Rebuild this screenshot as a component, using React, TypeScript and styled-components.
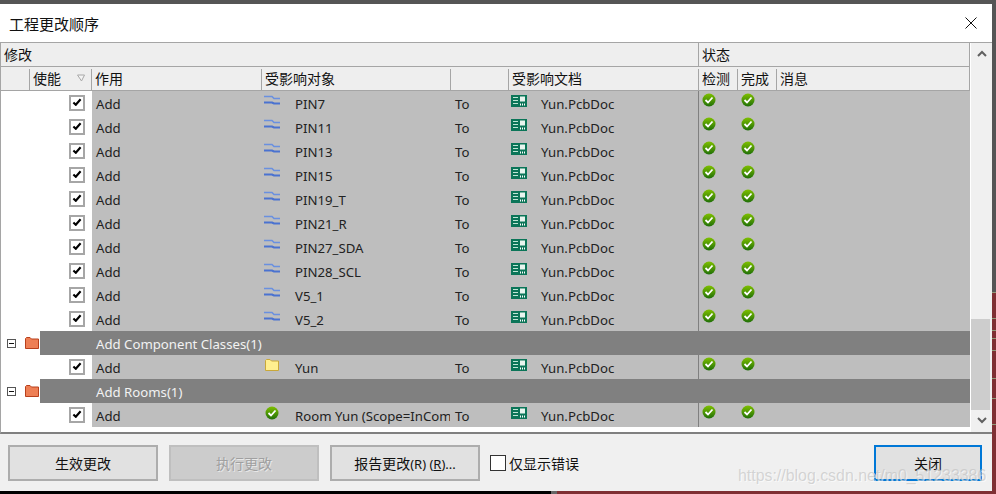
import styled, { createGlobalStyle } from 'styled-components'

const GlobalStyle = createGlobalStyle`
	html, body {
		margin: 0;
		padding: 0;
		background: #000;
	}
	body {
		font-family: "Noto Sans", "Noto Sans CJK SC", sans-serif;
	}
`

const Page = styled.div`
	position: relative;
	width: 996px;
	height: 494px;
	overflow: hidden;
	padding-top: 4px;
	box-sizing: border-box;
	background: linear-gradient(to right, #000 0 551px, #666 551px 557px, #7f2f33 557px);
`

const TopStrip = styled.div`
	position: absolute;
	top: 0;
	left: 0;
	width: 100%;
	height: 4px;
	background: #555;
`

const SideStrip = styled.div`
	position: absolute;
	top: 0;
	right: 0;
	width: 4px;
	height: 292px;
	background: #555;
`

const Traces = styled.svg`
	position: absolute;
	top: 292px;
	right: 0;
	width: 4px;
	height: 140px;
`

const Dialog = styled.div`
	position: relative;
	width: 992px;
	height: 487px;
	background: #f0f0f0;
	display: flex;
	flex-direction: column;
`

const TitleBar = styled.div`
	height: 38px;
	flex: none;
	background: #fff;
	display: flex;
	align-items: center;
	justify-content: space-between;
	padding: 0 15px 0 9px;
	font-size: 15px;
	color: #111;
`

const CloseIcon = styled.svg`
	width: 12px;
	height: 12px;
	display: block;
`

const Content = styled.div`
	height: 392px;
	flex: none;
	display: flex;
	background: #fff;
	border-top: 1px solid #a5a5a5;
	border-left: 1px solid #a5a5a5;
	border-bottom: 2px solid #808080;
	box-sizing: border-box;
`

const Table = styled.div`
	width: 969px;
	flex: none;
	display: flex;
	flex-direction: column;
`

const ScrollBar = styled.div`
	width: 21px;
	margin-left: 1px;
	background: #f0f0f0;
	display: flex;
	flex-direction: column;
	align-items: center;
`

const UpArrow = styled.svg`
	width: 10px;
	height: 7px;
	flex: none;
	margin: 7px 0 3px;
`

const DownArrow = styled.svg`
	width: 10px;
	height: 7px;
	flex: none;
	margin: 4px 0 8px;
`

const ScrollTrack = styled.div`
	flex: 1;
	width: 100%;
	display: flex;
	flex-direction: column;
	justify-content: flex-end;
`

const ScrollThumb = styled.div`
	height: 91px;
	width: 19px;
	margin-bottom: 3px;
	background: #cdcdcd;
`

const HeaderBand = styled.div`
	height: 23px;
	flex: none;
	display: grid;
	grid-template-columns: 697px 1fr;
	background: #eee;
	border-bottom: 1px solid #a5a5a5;
	border-right: 1px solid #a5a5a5;
	font-size: 14px;
	color: #111;
`

const BandCell = styled.div`
	display: flex;
	align-items: center;
	padding: 0 0 2px 3px;
	& + & {
		border-left: 1px solid #a5a5a5;
	}
`

const ColumnHeader = styled.div`
	height: 23px;
	flex: none;
	display: grid;
	grid-template-columns: 28px 62px 170px 189px 58px 190px 39px 39px 1fr;
	background: #eee;
	border-bottom: 1px solid #a5a5a5;
	border-right: 1px solid #a5a5a5;
	font-size: 14px;
	color: #111;
`

const ColumnCell = styled.div<{ $sep?: boolean }>`
	position: relative;
	display: flex;
	align-items: center;
	justify-content: space-between;
	padding: 0 6px 2px 4px;
	white-space: nowrap;
	&::before {
		content: '';
		display: ${(p) => (p.$sep === false ? 'none' : 'block')};
		position: absolute;
		left: 0;
		top: 2px;
		bottom: 0;
		width: 1px;
		background: #a5a5a5;
	}
`

const SortMark = styled.svg`
	width: 8px;
	height: 8px;
	flex: none;
`

const Body = styled.div`
	flex: 1;
	display: flex;
	flex-direction: column;
	overflow: hidden;
`

const Row = styled.div`
	height: 24px;
	flex: none;
	display: grid;
	grid-template-columns: 91px 169px 189px 58px 190px 39px 39px 1fr;
	font-size: 13.2px;
	color: #222;
`

const CheckCell = styled.div`
	background: #fff;
	display: flex;
	align-items: center;
	padding-left: 68px;
`

const CheckBox = styled.div`
	width: 16px;
	height: 16px;
	box-sizing: border-box;
	border: 2px solid #a6a6a6;
	background: #fff;
	display: flex;
	align-items: center;
	justify-content: center;
`

const CheckMark = styled.svg`
	width: 10px;
	height: 8px;
	margin: -2px 0 0 -1px;
`

const Cell = styled.div`
	background: #bebebe;
	display: flex;
	align-items: center;
	padding: 2px 0 0 4px;
	overflow: hidden;
	white-space: nowrap;
`

const ToCell = styled(Cell)`
	padding-left: 5px;
`

const IconCell = styled(Cell)`
	padding-left: 3px;
`

const StatusCell = styled(Cell)<{ $line?: boolean }>`
	padding-left: ${(p) => (p.$line ? '3px' : '4px')};
	${(p) => p.$line && 'border-left: 1px solid #808080;'}
	& > svg {
		margin-top: -9px;
	}
`

const IconSlot = styled.div<{ $width: number; $inset?: boolean }>`
	width: ${(p) => p.$width}px;
	flex: none;
	display: flex;
	margin-top: -7px;
	box-sizing: border-box;
	padding-left: ${(p) => (p.$inset ? '1px' : '0')};
`

const CellText = styled.span`
	display: block;
`

const StatusIcon = styled.svg`
	width: 14px;
	height: 14px;
	display: block;
	flex: none;
`

const GroupRow = styled.div`
	height: 24px;
	flex: none;
	display: flex;
	font-size: 13.2px;
	color: #f2f2f2;
`

const TreeCell = styled.div`
	width: 39px;
	flex: none;
	background: #fff;
	display: flex;
	align-items: center;
	padding-left: 6px;
	box-sizing: border-box;
	gap: 9px;
`

const TreeBox = styled.div`
	width: 9px;
	height: 9px;
	box-sizing: border-box;
	border: 1px solid #555;
	display: flex;
	align-items: center;
	justify-content: center;
	&::after {
		content: '';
		width: 5px;
		height: 1px;
		background: #111;
	}
`

const GroupLabel = styled.div`
	flex: 1;
	background: #808080;
	padding: 2px 0 0 56px;
	display: flex;
	align-items: center;
`

const Footer = styled.div`
	flex: 1;
	display: flex;
	align-items: center;
	padding: 1px 10px 0 8px;
	box-sizing: border-box;
	font-size: 14px;
`

const Button = styled.button<{ $disabled?: boolean }>`
	width: 150px;
	height: 36px;
	margin-right: 11px;
	box-sizing: border-box;
	border: 2px solid ${(p) => (p.$disabled ? '#bfbfbf' : '#adadad')};
	background: ${(p) => (p.$disabled ? '#cccccc' : '#e1e1e1')};
	color: ${(p) => (p.$disabled ? '#a0a0a0' : '#111')};
	text-shadow: ${(p) => (p.$disabled ? '1px 1px 0 #e8e8e8' : 'none')};
	font: inherit;
	padding: 0;
`

const CloseButton = styled(Button)`
	width: 108px;
	margin: 0 0 0 auto;
	border-color: #0078d7;
`

const ButtonLatin = styled.span`
	font-size: 13px;
`

const ShowErrors = styled.label`
	display: flex;
	align-items: center;
	gap: 3px;
	color: #111;
	margin-left: -1px;
`

const EmptyBox = styled.span`
	width: 16px;
	height: 16px;
	box-sizing: border-box;
	border: 1px solid #333;
	background: #fff;
`

const Underlined = styled.span`
	text-decoration: underline;
`

const Watermark = styled.div`
	position: absolute;
	left: 738px;
	top: 466px;
	font-family: "Liberation Sans", sans-serif;
	font-size: 15.9px;
	line-height: 20px;
	color: rgba(190, 190, 190, 0.6);
	text-shadow: 1px 1px 0 rgba(255, 255, 255, 0.6);
	white-space: nowrap;
`

const NetIcon = () => (
	<svg width="16" height="11" viewBox="0 0 16 11" fill="none">
		<path d="M0 1.5H8L10 3.5H16" stroke="#6a90e0" strokeWidth="1.6" />
		<path d="M0 7.5H8L10 8.5H16" stroke="#4a72d0" strokeWidth="2.2" />
	</svg>
)

const PcbIcon = () => (
	<svg width="16" height="12" viewBox="0 0 16 12">
		<rect width="16" height="12" fill="#0b7558" />
		<rect x="9" y="1.5" width="5" height="5" fill="#e8f5ef" />
		<path d="M2 2.5H7M2 5.5H7M2 8.5H7" stroke="#bfe6d6" strokeWidth="1.2" />
		<path d="M9 9.5H15" stroke="#fff" strokeWidth="2" strokeDasharray="1 1" />
	</svg>
)

const FolderIcon = ({ fill, edge }: { fill: string; edge: string }) => (
	<svg width="14" height="12" viewBox="0 0 14 12">
		<path d="M.5 11.5V1.5L1.5.5H5L6.5 2H13.5V11.5Z" fill={fill} stroke={edge} />
	</svg>
)

const OkIcon = ({ id }: { id: string }) => (
	<StatusIcon viewBox="0 0 14 14">
		<defs>
			<linearGradient id={id} x1="0" y1="0" x2="0" y2="1">
				<stop offset="0" stopColor="#7fc000" />
				<stop offset="1" stopColor="#1f6f08" />
			</linearGradient>
		</defs>
		<circle cx="7" cy="7" r="6.5" fill={`url(#${id})`} />
		<path d="M3.5 7L6 9.5L10.5 4.5" fill="none" stroke="#fff" strokeWidth="1.8" />
	</StatusIcon>
)

const Check = () => (
	<CheckBox>
		<CheckMark viewBox="0 0 12 10">
			<path d="M1.5 5.5L4.5 8.5L10.5 1.5" fill="none" stroke="#000" strokeWidth="2.6" />
		</CheckMark>
	</CheckBox>
)

const Change = ({ name, icon, idx }: { name: string; icon?: 'folder' | 'room'; idx: number }) => (
	<Row>
		<CheckCell>
			<Check />
		</CheckCell>
		<Cell>Add</Cell>
		<IconCell>
			<IconSlot $width={31} $inset={!!icon}>
				{icon === 'folder' ? (
					<FolderIcon fill="#ffef8f" edge="#c9a83a" />
				) : icon === 'room' ? (
					<OkIcon id={`room${idx}`} />
				) : (
					<NetIcon />
				)}
			</IconSlot>
			<CellText>{name}</CellText>
		</IconCell>
		<ToCell>To</ToCell>
		<IconCell>
			<IconSlot $width={30}>
				<PcbIcon />
			</IconSlot>
			<CellText>Yun.PcbDoc</CellText>
		</IconCell>
		<StatusCell $line>
			<OkIcon id={`a${idx}`} />
		</StatusCell>
		<StatusCell>
			<OkIcon id={`b${idx}`} />
		</StatusCell>
		<Cell />
	</Row>
)

const Group = ({ label }: { label: string }) => (
	<GroupRow>
		<TreeCell>
			<TreeBox />
			<FolderIcon fill="#ee7f55" edge="#b8401c" />
		</TreeCell>
		<GroupLabel>{label}</GroupLabel>
	</GroupRow>
)

const nets = ['PIN7', 'PIN11', 'PIN13', 'PIN15', 'PIN19_T', 'PIN21_R', 'PIN27_SDA', 'PIN28_SCL', 'V5_1', 'V5_2']

export default function App() {
	return (
		<Page>
			<GlobalStyle />
			<TopStrip />
			<SideStrip />
			<Traces viewBox="0 0 4 140">
				<path d="M0 .5H4M0 26.5H4M0 38.5H4M0 46.5H4M0 58.5H4M0 86.5H4M0 106.5H4M0 132.5H4" stroke="#8f9a78" strokeWidth="1" />
			</Traces>
			<Dialog>
				<TitleBar>
					<span>工程更改顺序</span>
					<CloseIcon viewBox="0 0 12 12">
						<path d="M.5 .5L11.5 11.5M11.5 .5L.5 11.5" stroke="#111" strokeWidth="1" />
					</CloseIcon>
				</TitleBar>
				<Content>
					<Table>
						<HeaderBand>
							<BandCell>修改</BandCell>
							<BandCell>状态</BandCell>
						</HeaderBand>
						<ColumnHeader>
							<ColumnCell $sep={false} />
							<ColumnCell>
								使能
								<SortMark viewBox="0 0 8 8">
									<path d="M.5 1H7.5L4.5 7Z" fill="#f4f4f4" stroke="#a8a8a8" />
								</SortMark>
							</ColumnCell>
							<ColumnCell>作用</ColumnCell>
							<ColumnCell>受影响对象</ColumnCell>
							<ColumnCell />
							<ColumnCell>受影响文档</ColumnCell>
							<ColumnCell>检测</ColumnCell>
							<ColumnCell>完成</ColumnCell>
							<ColumnCell>消息</ColumnCell>
						</ColumnHeader>
						<Body>
							{nets.map((n, i) => (
								<Change key={n} name={n} idx={i} />
							))}
							<Group label="Add Component Classes(1)" />
							<Change name="Yun" icon="folder" idx={10} />
							<Group label="Add Rooms(1)" />
							<Change name="Room Yun (Scope=InCom" icon="room" idx={11} />
						</Body>
					</Table>
					<ScrollBar>
						<UpArrow viewBox="0 0 10 7">
							<path d="M1 6L5 2L9 6" fill="none" stroke="#606060" strokeWidth="2" />
						</UpArrow>
						<ScrollTrack>
							<ScrollThumb />
						</ScrollTrack>
						<DownArrow viewBox="0 0 10 7">
							<path d="M1 1L5 5L9 1" fill="none" stroke="#606060" strokeWidth="2" />
						</DownArrow>
					</ScrollBar>
				</Content>
				<Footer>
					<Button>生效更改</Button>
					<Button $disabled>执行更改</Button>
					<Button>
						报告更改
						<ButtonLatin>
							(R) (<Underlined>R</Underlined>)...
						</ButtonLatin>
					</Button>
					<ShowErrors>
						<EmptyBox />
						仅显示错误
					</ShowErrors>
					<CloseButton>关闭</CloseButton>
				</Footer>
			</Dialog>
			<Watermark>https://blog.csdn.net/m0_51233386</Watermark>
		</Page>
	)
}
